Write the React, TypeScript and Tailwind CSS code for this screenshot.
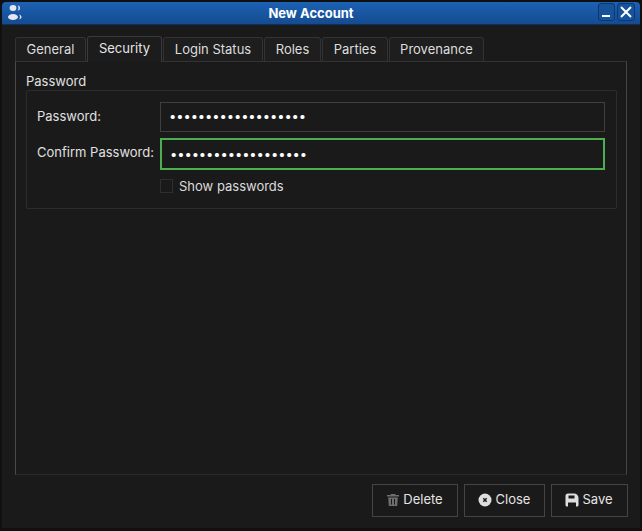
import React from "react";

function Tab({ label, active }: { label: string; active?: boolean }) {
  return active ? (
    <div className="relative z-10 -mb-px flex h-[26px] w-[75px] items-center justify-center rounded-t-[3px] border border-b-0 border-[#3a3a3a] bg-[#1c1c1c] pb-[2px] text-[#e6e6e6]">
      {label}
    </div>
  ) : (
    <div className="flex h-[24px] items-center justify-center rounded-t-[3px] border border-b-0 border-[#333333] bg-[#1e1e1e] text-[#dddddd]">
      {label}
    </div>
  );
}

function Dots() {
  return (
    <span className="text-[13px] leading-none tracking-[-0.1px] text-white">
      {"•".repeat(19)}
    </span>
  );
}

function Btn({ w, icon, label }: { w: string; icon: React.ReactNode; label: string }) {
  return (
    <div className={`flex h-[33px] items-center justify-center gap-[3px] border border-[#444444] pb-[2px] text-[#e4e4e4] ${w}`}>
      {icon}
      <span>{label}</span>
    </div>
  );
}

export default function App() {
  return (
    <div className="flex h-[531px] w-[642px] flex-col overflow-hidden bg-[#101010] p-[2px] pb-[3px] font-['Inter',sans-serif] text-[13px] leading-none">
      <div className="flex h-[23px] shrink-0 items-center justify-between rounded-t-[4px] border-b border-[#0f2f5c] bg-gradient-to-b from-[#1c62b4] to-[#154b90] pl-[6px] pr-[5px]">
        <svg width="16" height="16" viewBox="0 0 16 16" fill="#e4e8ee" className="-mt-[3px]">
          <ellipse cx="5" cy="4" rx="3.4" ry="3" />
          <ellipse cx="5" cy="13" rx="5" ry="3" />
          <path d="M9.5 1.5a2.4 2.4 0 0 1 0 5 3.8 3.8 0 0 0 0-5zM11 10.5c1.6.4 2.5 1.4 2.5 2.5s-.9 2-2.5 2.5c.7-.7 1-1.5 1-2.5s-.3-1.800-1-2.500z" />
        </svg>
        <span className="font-['Inter',sans-serif] text-[13px] font-bold text-white">New Account</span>
        <div className="-mt-[3px] flex gap-[2px]">
          <div className="flex h-[18px] w-[17px] items-end justify-center rounded-[3px] border border-[#0e366f] bg-[#17539b] pb-[3px]">
            <div className="h-[2px] w-[8px] bg-white" />
          </div>
          <div className="flex h-[18px] w-[18px] items-center justify-center rounded-[3px] border border-[#0e366f] bg-[#17539b]">
            <svg width="14" height="14" viewBox="0 0 14 14" stroke="white" strokeWidth="2" fill="none">
              <path d="M2 2l10 10M12 2L2 12" />
            </svg>
          </div>
        </div>
      </div>
      <div className="flex min-h-0 flex-1 flex-col bg-[#1a1a1a] px-[13px]">
        <div className="flex h-[36px] shrink-0 items-end gap-[1px]">
          <div className="w-[71px]"><Tab label="General" /></div>
          <Tab label="Security" active />
          <div className="w-[100px]"><Tab label="Login Status" /></div>
          <div className="w-[57px]"><Tab label="Roles" /></div>
          <div className="w-[66px]"><Tab label="Parties" /></div>
          <div className="w-[95px]"><Tab label="Provenance" /></div>
        </div>
        <div className="flex h-[414px] shrink-0 flex-col border border-[#333333] border-b-[#2a2a2a] border-l-[#4a4a4a] border-r-[#444444] pl-[10px] pr-[9px]">
          <div className="h-[28px] pt-[13px] text-[#e0e0e0]">Password</div>
          <div className="flex h-[119px] flex-col rounded-[2px] border border-[#2c2c2c] pl-[10px] pr-[11px] pt-[11px]">
            <div className="flex items-center">
              <div className="w-[123px] -mt-[2px] text-[#e0e0e0]">Password:</div>
              <div className="flex h-[30px] flex-1 items-center border border-[#3f3f3f] pb-[1px] pl-[8px]"><Dots /></div>
            </div>
            <div className="mt-[6px] flex items-center">
              <div className="w-[123px] -mt-[3px] text-[#e0e0e0]">Confirm Password:</div>
              <div className="flex h-[32px] flex-1 items-center border-2 border-[#4caf50] pl-[8px]"><Dots /></div>
            </div>
            <div className="ml-[123px] mt-[9px] flex items-center gap-[6px]">
              <div className="h-[14px] w-[13px] border border-[#2f2f2f]" />
              <span className="text-[#dcdcdc]">Show passwords</span>
            </div>
          </div>
        </div>
        <div className="-mr-px flex flex-1 items-start justify-end gap-[6px] pt-[9px]">
          <Btn
            w="w-[86px]"
            label="Delete"
            icon={
              <svg width="14" height="14" viewBox="0 0 14 14" fill="#6e6e6e" className="-ml-[1px]">
                <path d="M5 1h4l.6 1H13v1.500H1V2h3.400zM2.200 4.500h9.600l-.6 8.500H2.800zM5 6v5.500h1V6zM8 6v5.500h1V6z" fillRule="evenodd" />
              </svg>
            }
          />
          <Btn
            w="w-[81px]"
            label="Close"
            icon={
              <svg width="14" height="14" viewBox="0 0 14 14" className="-ml-[1px] mr-[1px]">
                <circle cx="7" cy="7" r="6.500" fill="#dedede" />
                <path d="M5.300 5.300l3.400 3.400M8.700 5.300L5.300 8.700" stroke="#1a1a1a" strokeWidth="1.400" />
              </svg>
            }
          />
          <Btn
            w="w-[77px]"
            label="Save"
            icon={
              <svg width="14" height="14" viewBox="0 0 14 14" fill="#dedede" className="-ml-[1px]">
                <path fillRule="evenodd" d="M3 .5h6a4.500 4.500 0 0 1 4.500 4.500v7a1.500 1.500 0 0 1-1.500 1.500H2A1.500 1.500 0 0 1 .5 12V3A2.500 2.500 0 0 1 3 .5zM3.500 2.500v3h6v-3zM3 9.500v4h8v-4z" />
              </svg>
            }
          />
        </div>
      </div>
    </div>
  );
}
